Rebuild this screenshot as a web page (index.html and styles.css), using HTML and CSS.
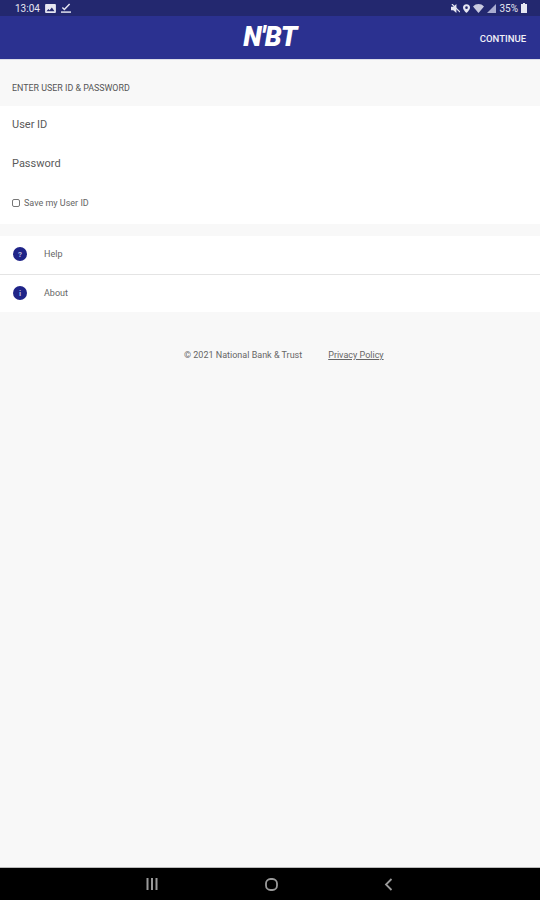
FILE: index.html
```html
<!DOCTYPE html>
<html lang="en">
<head>
    <meta charset="UTF-8">
    <meta name="viewport" content="width=device-width, initial-scale=1.0">
    <title>NBT Login</title>
    <link rel="stylesheet" href="styles.css">
</head>
<body>

<div class="screen">
    <div class="status-bar">
        <div class="status-left">
            <span>13:04</span>
            <svg class="status-icon" width="11" height="9" viewBox="0 0 12 10"><path fill="#e6e7f2" fill-rule="evenodd" d="M1 0h10a1 1 0 0 1 1 1v8a1 1 0 0 1-1 1H1a1 1 0 0 1-1-1V1a1 1 0 0 1 1-1zm.5 8h9L7.5 4 5 7 3.700 5.500z"/></svg>
            <svg class="status-icon" width="10" height="10" viewBox="0 0 11 11"><path fill="none" stroke="#e6e7f2" stroke-width="1.600" d="M1.500 5l2.200 2.200L9.500 1"/><path stroke="#e6e7f2" stroke-width="1.600" d="M0 10h11"/></svg>
        </div>
        <div class="status-right">
            <svg width="9" height="9" viewBox="0 0 10 10"><path fill="#e6e7f2" d="M0 3h2.500L6 0v10L2.500 7H0z"/><path stroke="#e6e7f2" stroke-width="1.200" d="M1 0l9 9"/></svg>
            <svg width="7" height="9" viewBox="0 0 8 10"><path fill="#e6e7f2" fill-rule="evenodd" d="M4 0a4 4 0 0 1 4 4c0 2.500-4 6-4 6S0 6.500 0 4a4 4 0 0 1 4-4zm0 2.500a1.500 1.500 0 1 0 0 3 1.500 1.500 0 0 0 0-3z"/></svg>
            <svg width="11" height="9" viewBox="0 0 11 9"><path fill="#c9cbe0" d="M0 2.500C3-.8 8-.8 11 2.500L5.500 9z"/></svg>
            <svg width="9" height="9" viewBox="0 0 9 9"><path fill="#a9acd0" d="M9 0v9H0z"/></svg>
            <span>35%</span>
            <svg width="6" height="10" viewBox="0 0 6 10"><path fill="#e6e7f2" d="M2 0h2v1h2v9H0V1h2z"/></svg>
        </div>
    </div>

    <div class="app-bar">
        <div class="logo">N'BT</div>
        <a class="continue-btn">CONTINUE</a>
    </div>

    <div class="section-title">ENTER USER ID &amp; PASSWORD</div>

    <div class="login-form">
        <div class="field">User ID</div>
        <div class="field">Password</div>
        <label class="save-row">
            <span class="check"></span>
            <span>Save my User ID</span>
        </label>
    </div>

    <div class="menu">
        <div class="menu-item">
            <span class="menu-badge">?</span>
            <span>Help</span>
        </div>
        <div class="menu-item">
            <span class="menu-badge">i</span>
            <span>About</span>
        </div>
    </div>

    <div class="legal">
        <span>© 2021 National Bank &amp; Trust</span>
        <a class="privacy">Privacy Policy</a>
    </div>

    <div class="nav-bar">
        <svg width="12" height="12" viewBox="0 0 12 12"><path stroke="#9a9a9a" stroke-width="2" d="M1.500 0v12M6 0v12M10.500 0v12"/></svg>
        <svg width="13" height="13" viewBox="0 0 13 13"><rect x="1" y="1" width="11" height="11" rx="4.500" fill="none" stroke="#9a9a9a" stroke-width="1.800"/></svg>
        <svg width="9" height="13" viewBox="0 0 9 13"><path fill="none" stroke="#9a9a9a" stroke-width="1.800" d="M7.500 1L2 6.500 7.500 12"/></svg>
    </div>
</div>

</body>
</html>
```

FILE: styles.css
```css
body {
    margin: 0;
    padding: 0;
    background-color: #f8f8f8;
    font-family: 'Roboto', 'Liberation Sans', sans-serif;
    color: #444;
    overflow: hidden;
}
.screen {
    width: 540px;
    height: 900px;
    display: flex;
    flex-direction: column;
}
.status-bar {
    height: 16px;
    flex-shrink: 0;
    background-color: #23286f;
    color: #e6e7f2;
    font-size: 10px;
    display: flex;
    justify-content: space-between;
    align-items: center;
    padding: 0 13px 0 15px;
}
.status-left,
.status-right {
    display: flex;
    align-items: center;
}
.status-left {
    gap: 5px;
}
.status-right {
    gap: 3px;
}
.app-bar {
    height: 43px;
    flex-shrink: 0;
    background-color: #2b3190;
    border-bottom: 1px solid #dcdde8;
    position: relative;
    display: flex;
    align-items: center;
    justify-content: center;
}
.logo {
    color: #fff;
    font-family: 'Roboto', sans-serif;
    font-weight: 900;
    font-style: italic;
    font-size: 27px;
    line-height: 27px;
    letter-spacing: -0.500px;
    margin-top: -1px;
}
.continue-btn {
    position: absolute;
    right: 14px;
    top: 17px;
    color: #f2f2f8;
    font-size: 9.500px;
    font-weight: 500;
}
.section-title {
    height: 46px;
    line-height: 57px;
    padding-left: 12px;
    font-size: 8.900px;
    color: #555;
    box-sizing: border-box;
    flex-shrink: 0;
}
.login-form {
    background-color: #fff;
    height: 118px;
    flex-shrink: 0;
}
.field {
    height: 39px;
    line-height: 37px;
    padding-left: 12px;
    font-size: 11px;
    color: #5a5a5a;
}
.save-row {
    display: flex;
    align-items: center;
    gap: 4px;
    padding: 14px 0 0 12px;
    font-size: 9px;
    color: #666;
}
.check {
    width: 6px;
    height: 6px;
    border: 1px solid #777;
    border-radius: 2px;
}
.menu {
    margin-top: 12px;
    background-color: #fff;
    flex-shrink: 0;
}
.menu-item {
    height: 38px;
    box-sizing: border-box;
    display: flex;
    align-items: center;
    gap: 17px;
    padding: 0 0 2px 13px;
    font-size: 9px;
    color: #666;
}
.menu-item + .menu-item {
    border-top: 1px solid #e4e4e4;
    padding-bottom: 1px;
}
.menu-badge {
    width: 14px;
    height: 14px;
    border-radius: 50%;
    background-color: #1f2488;
    color: #b9bbe0;
    font-size: 8px;
    font-weight: bold;
    display: flex;
    align-items: center;
    justify-content: center;
}
.legal {
    margin-top: 38px;
    padding-left: 184px;
    display: flex;
    gap: 26px;
    font-size: 9px;
    color: #666;
    flex-grow: 1;
}
.privacy {
    text-decoration: underline;
}
.nav-bar {
    height: 32px;
    flex-shrink: 0;
    background-color: #000;
    border-top: 1px solid #bbb;
    display: flex;
    align-items: center;
    padding: 0 147px 0 146px;
    justify-content: space-between;
}
```
